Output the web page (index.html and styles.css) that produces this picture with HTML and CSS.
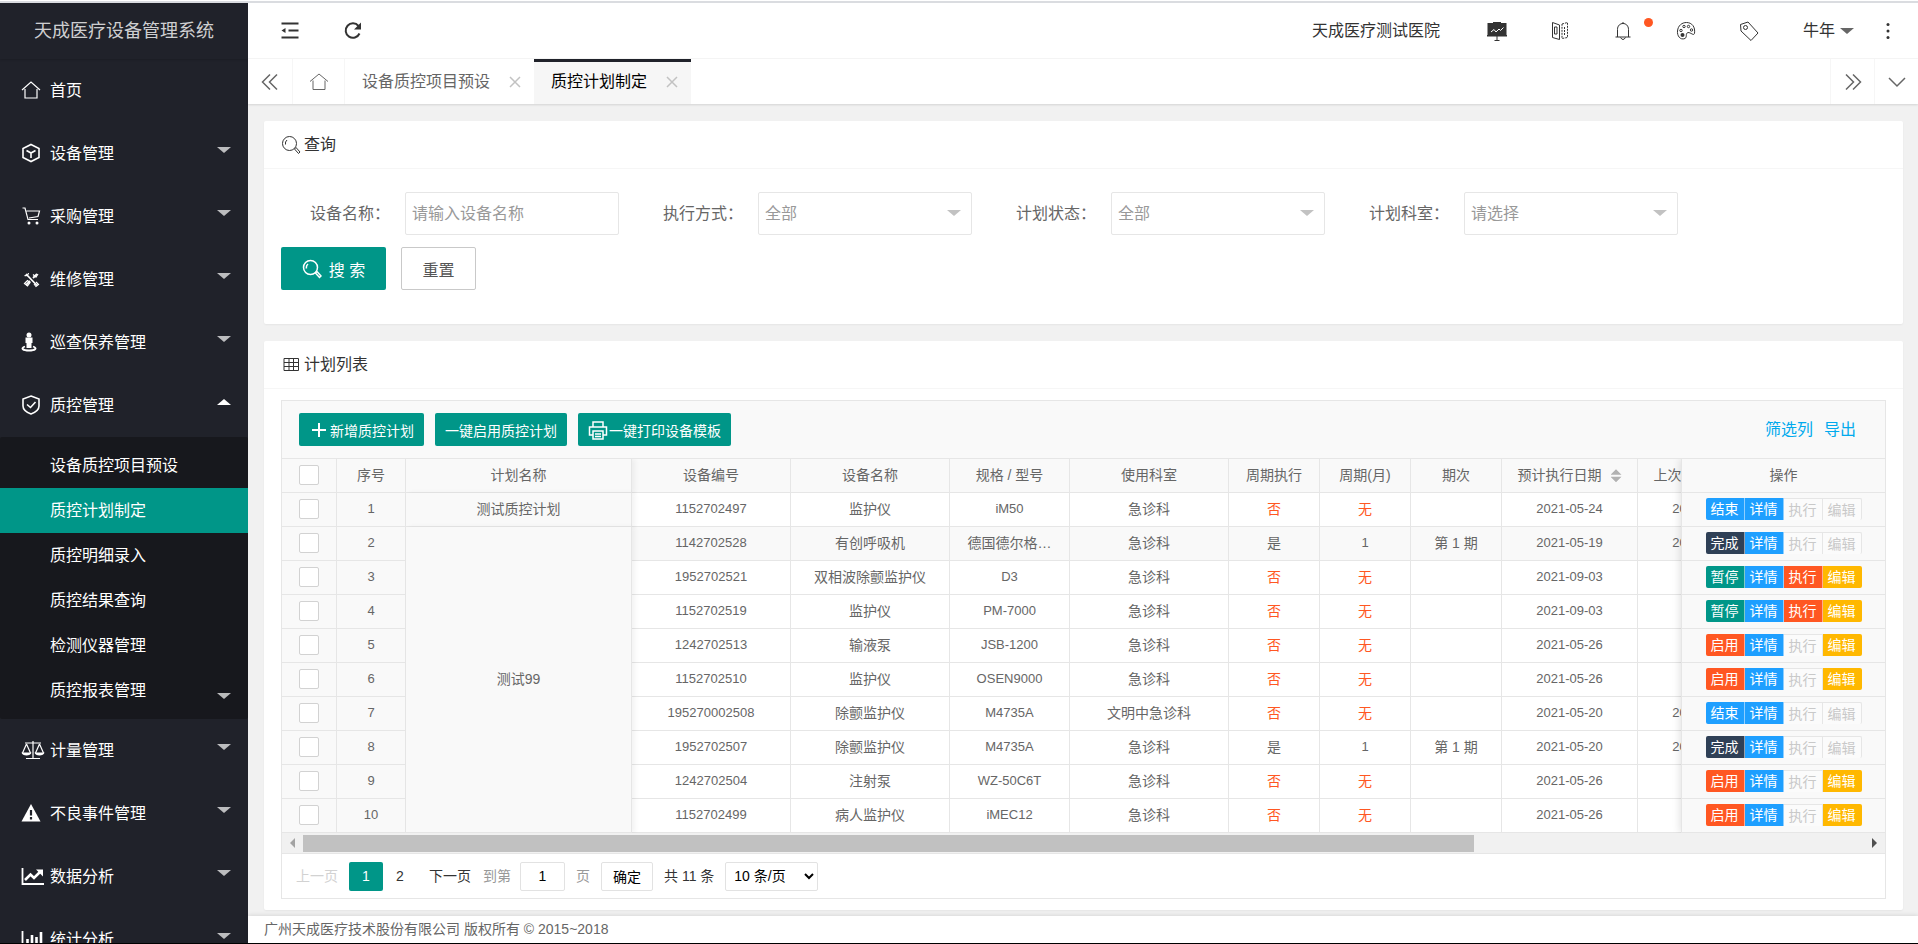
FILE: index.html
```html
<!DOCTYPE html>
<html lang="zh-CN">
<head>
    <meta charset="UTF-8">
    <meta name="viewport" content="width=device-width, initial-scale=1.0">
    <title>天成医疗设备管理系统</title>
    <link rel="stylesheet" href="styles.css">
</head>
<body>
<div class="layout">
    <aside class="side">
        <div class="logo">天成医疗设备管理系统</div>
        <nav>
            <a class="nav-item" href="#">
                <svg class="nav-icon" viewBox="0 0 20 20"><path d="M1 10 L10 2 L19 10 M4 9 V18 H16 V9"/></svg>首页</a>
            <a class="nav-item" href="#">
                <svg class="nav-icon bold" viewBox="0 0 20 20"><path d="M10 1.500 L18 5.500 V14.500 L10 18.500 L2 14.500 V5.500 Z M5.500 7.500 L10 10 L14.500 7.500 M10 10 V15"/></svg>设备管理<i class="caret"></i></a>
            <a class="nav-item" href="#">
                <svg class="nav-icon" viewBox="0 0 20 20"><path d="M1.500 2 H4 L7 13.500 H17 M5.500 5 H18.500 L17 10.500 L8 12"/><circle class="fill" cx="8" cy="17" r="1.500"/><circle class="fill" cx="16" cy="17" r="1.500"/></svg>采购管理<i class="caret"></i></a>
            <a class="nav-item" href="#">
                <svg class="nav-icon" viewBox="0 0 20 20"><path class="thick" d="M5 5 L16 16.500 M16 5 L12 9 M9 12 L5 16"/><path d="M3.500 6.500 A3 3 0 0 0 7.500 4 M12 5.500 L15 8 L17 5 M3.500 14.500 L6.500 17 L9 13.500 L6.500 11.500 Z M13 15 L15 17.500 L17.500 15.500 L15 13"/></svg>维修管理<i class="caret"></i></a>
            <a class="nav-item" href="#">
                <svg class="nav-icon" viewBox="0 0 20 20"><circle class="fill" cx="8" cy="3" r="2.500"/><path class="fill" d="M4.500 5.500 H11.500 V11 H10.500 V16 H5.500 V11 H4.500 Z"/><path class="thick" d="M4 14.500 C-1 16.500 2 18.500 8 18.500 S17 16.500 12 14.500"/></svg>巡查保养管理<i class="caret"></i></a>
            <a class="nav-item" href="#">
                <svg class="nav-icon bold" viewBox="0 0 20 20"><path d="M10 1 L18 4 V11 C18 15 14 17.500 10 19 C6 17.500 2 15 2 11 V4 Z M6 9.500 L9.500 12.500 L14.500 7"/></svg>质控管理<i class="caret open"></i></a>
            <div class="sub-nav">
                <a href="#">设备质控项目预设</a>
                <a href="#" class="active">质控计划制定</a>
                <a href="#">质控明细录入</a>
                <a href="#">质控结果查询</a>
                <a href="#">检测仪器管理</a>
                <a href="#">质控报表管理<i class="caret"></i></a>
            </div>
            <a class="nav-item" href="#">
                <svg class="nav-icon wide" viewBox="0 0 24 20"><path d="M4 3 H20 M12 1 V18 M5 18.500 H19 M5.500 4 L1.500 13 M5.500 4 L9.500 13 M18.500 4 L14.500 13 M18.500 4 L22.500 13"/><path class="fill" d="M0.500 12.500 H10.500 C10 16.500 1 16.500 0.500 12.500 Z M13.500 12.500 H23.500 C23 16.500 14 16.500 13.500 12.500 Z"/></svg>计量管理<i class="caret"></i></a>
            <a class="nav-item" href="#">
                <svg class="nav-icon" viewBox="0 0 20 20"><path class="fill" d="M10 1 L19.500 18.500 H0.500 Z"/><path class="dark" d="M10 7 V12.500 M10 14 V16.500"/></svg>不良事件管理<i class="caret"></i></a>
            <a class="nav-item" href="#">
                <svg class="nav-icon wide" viewBox="0 0 24 20"><path class="thick" d="M1.500 2 V18 H23"/><path class="line" d="M4 14 L9.500 8.500 L13 12 L19.500 5.500"/><path class="fill" d="M15 3.500 H22 V10.500 Z"/></svg>数据分析<i class="caret"></i></a>
            <a class="nav-item" href="#">
                <svg class="nav-icon wide" viewBox="0 0 24 20"><path class="thick" d="M1.500 2 V18 H23"/><path class="line" d="M6.500 10 V16 M11 6 V16 M15.500 8 V16 M20 3 V16"/></svg>统计分析<i class="caret"></i></a>
        </nav>
    </aside>

    <div class="main">
        <header class="top">
            <a class="top-cell" href="#" title="侧边伸缩"><svg class="icon" viewBox="0 0 20 20"><path class="w2" d="M1.500 2.500 H18.500 M8.500 9.500 H18.500 M1.500 16.500 H18.500"/><path class="fill" d="M1.500 9.500 L5.500 7 V12 Z"/></svg></a>
            <a class="top-cell" href="#" title="刷新"><svg class="icon" viewBox="0 0 20 20"><path class="w2" d="M16.500 12.500 A7.200 7.200 0 1 1 15.500 5"/><path class="fill" d="M18 1.500 V8.500 H11 Z"/></svg></a>
            <span class="hospital">天成医疗测试医院</span>
            <a class="top-cell" href="#"><svg class="icon" viewBox="0 0 20 20"><path class="fill" d="M6 1 H14 V2 H19.500 V14 H20 V15.500 H0 V14 H.5 V2 H6 Z"/><path class="light" d="M4 11 L7 8.500 L9 11 L12 8 L13.500 9.500 L16.500 6.500"/><path d="M10 15 V19 M7.500 19.500 H12.500"/></svg></a>
            <a class="top-cell" href="#"><svg class="icon" viewBox="0 0 20 20"><path d="M2.500 16.500 V1.500 L9.500 4 V18.500 Z M4.500 6 H7 V13 H4.500 Z"/><path class="dots" d="M12 3 L17.500 1.500 V16.500 L12 17.500 Z M14.500 6 V14"/></svg></a>
            <a class="top-cell" href="#"><svg class="icon" viewBox="0 0 20 20"><path d="M2.500 16 H17.500 M4.500 16 V8.500 C4.500 0.500 15.500 0.500 15.500 8.500 V16 M7.500 16.500 Q10 20.500 12.500 16.500 M10 1 V2.500"/></svg><i class="dot"></i></a>
            <a class="top-cell" href="#"><svg class="icon" viewBox="0 0 20 20"><path d="M9 17.500 C4 19.500 1 14.500 1.500 10 C2 4.500 6 1.500 10.500 1.500 C16 1.500 19.500 6 18.500 12.500 C17.500 15 15 11.500 12 11.500 C9 12.500 11.500 16 9 17.500 Z"/><circle cx="5" cy="9.500" r="1.200"/><circle cx="8" cy="5.500" r="1.200"/><circle cx="12.500" cy="5.500" r="1.200"/><circle cx="15.500" cy="9" r="1.200"/><circle class="fill" cx="6.500" cy="14" r="2"/></svg></a>
            <a class="top-cell" href="#"><svg class="icon" viewBox="0 0 20 20"><path d="M1.500 3.500 L9 1 L19 12 L12 19.500 L2 10 Z"/><circle cx="6.500" cy="6.500" r="2"/></svg></a>
            <a class="user" href="#">牛年<i class="caret dark"></i></a>
            <a class="more" href="#"><svg class="icon" viewBox="0 0 20 20"><circle class="fill" cx="10" cy="3.500" r="1.500"/><circle class="fill" cx="10" cy="10" r="1.500"/><circle class="fill" cx="10" cy="16.500" r="1.500"/></svg></a>
        </header>

        <div class="tabs">
            <a class="tab-ctrl" href="#"><svg class="icon" viewBox="0 0 20 20"><path class="w15" d="M10 2.500 L2.500 10 L10 17.500 M17 2.500 L9.500 10 L17 17.500"/></svg></a>
            <a class="tab-home" href="#"><svg class="icon" viewBox="0 0 20 20"><path d="M1 9.500 L10 2 L19 9.500 M4 8.500 V17.500 H16 V8.500"/></svg></a>
            <a class="tab" href="#">设备质控项目预设<svg class="close" viewBox="0 0 16 16"><path d="M3 3 L13 13 M13 3 L3 13"/></svg></a>
            <a class="tab current" href="#">质控计划制定<svg class="close" viewBox="0 0 16 16"><path d="M3 3 L13 13 M13 3 L3 13"/></svg></a>
            <a class="tab-ctrl right" href="#"><svg class="icon" viewBox="0 0 20 20"><path class="w15" d="M3 2.500 L10.500 10 L3 17.500 M10 2.500 L17.500 10 L10 17.500"/></svg></a>
            <a class="tab-ctrl last" href="#"><svg class="icon" viewBox="0 0 20 20"><path class="w15" d="M2 6 L10 14 L18 6"/></svg></a>
        </div>

        <main class="content">
            <section class="card">
                <h2 class="card-title"><svg class="icon" viewBox="0 0 20 20"><circle cx="8.500" cy="8.500" r="7"/><path d="M4.500 9.500 A4.500 4.500 0 0 1 6 5 M13.500 14 L15 12.500 L19 17 L17.500 18.500 Z"/></svg>查询</h2>
                <form class="search">
                    <div class="fields">
                        <div class="field">
                            <label for="device-name">设备名称：</label>
                            <input id="device-name" class="control" type="text" placeholder="请输入设备名称">
                        </div>
                        <div class="field">
                            <label for="exec-type">执行方式：</label>
                            <div class="select-box"><select id="exec-type" class="control"><option>全部</option></select></div>
                        </div>
                        <div class="field">
                            <label for="plan-status">计划状态：</label>
                            <div class="select-box"><select id="plan-status" class="control"><option>全部</option></select></div>
                        </div>
                        <div class="field">
                            <label for="plan-dept">计划科室：</label>
                            <div class="select-box"><select id="plan-dept" class="control"><option>请选择</option></select></div>
                        </div>
                    </div>
                    <div class="actions">
                        <button type="button" class="btn-search"><svg class="icon" viewBox="0 0 20 20"><circle cx="8.500" cy="8.500" r="7"/><path d="M4.500 9.500 A4.500 4.500 0 0 1 6 5 M13.500 14 L15 12.500 L19 17 L17.500 18.500 Z"/></svg>搜 索</button>
                        <button type="reset" class="btn-reset">重置</button>
                    </div>
                </form>
            </section>

            <section class="card">
                <h2 class="card-title"><svg class="icon" viewBox="0 0 20 20"><path d="M3 3.500 H17.500 V15.500 H3 Z M3 7.500 H17.500 M3 11.500 H17.500 M8 3.500 V15.500 M12.500 3.500 V15.500"/></svg>计划列表</h2>
                <div class="grid">
                    <div class="toolbar">
                        <button type="button" class="btn-sm"><svg class="icon" viewBox="0 0 20 20"><path class="w2" d="M10 3 V17 M3 10 H17"/></svg>新增质控计划</button>
                        <button type="button" class="btn-sm">一键启用质控计划</button>
                        <button type="button" class="btn-sm"><svg class="icon" viewBox="0 0 20 20"><path class="w15" d="M5 7 V2 H15 V7 M5 15 H1.500 V7 H18.500 V15 H15 M5 11 H15 V19 H5 Z M7 14 H13 M7 16.500 H13"/></svg>一键打印设备模板</button>
                        <div class="tool-links"><a href="#">筛选列</a><a href="#">导出</a></div>
                    </div>
                    <div class="tables">
                        <div class="scroll-pane">
                            <table class="plan-table">
                                <colgroup>
                                    <col class="c-check"><col class="c-no"><col class="c-plan"><col class="c-mid"><col class="c-mid"><col class="c-model"><col class="c-mid"><col class="c-small"><col class="c-small"><col class="c-small"><col class="c-date"><col class="c-date">
                                </colgroup>
                                <thead>
                                    <tr><th class="fix"><input type="checkbox" aria-label="全选"></th><th class="fix">序号</th><th class="fix edge">计划名称</th><th>设备编号</th><th>设备名称</th><th>规格 / 型号</th><th>使用科室</th><th>周期执行</th><th>周期(月)</th><th>期次</th><th>预计执行日期<i class="sort"></i></th><th>上次执行日期<i class="sort"></i></th></tr>
                                </thead>
                                <tbody>
                                    <tr><td class="fix"><input type="checkbox" aria-label="选择 1"></td><td class="fix num">1</td><td class="fix edge">测试质控计划</td><td class="num">1152702497</td><td>监护仪</td><td class="num">iM50</td><td>急诊科</td><td class="red">否</td><td class="red">无</td><td></td><td class="num">2021-05-24</td><td class="num">2021-05-24</td></tr>
                                    <tr class="even"><td class="fix"><input type="checkbox" aria-label="选择 2"></td><td class="fix num">2</td><td class="fix edge" rowspan="9">测试99</td><td class="num">1142702528</td><td>有创呼吸机</td><td>德国德尔格…</td><td>急诊科</td><td>是</td><td class="num">1</td><td>第 1 期</td><td class="num">2021-05-19</td><td class="num">2021-05-19</td></tr>
                                    <tr><td class="fix"><input type="checkbox" aria-label="选择 3"></td><td class="fix num">3</td><td class="num">1952702521</td><td>双相波除颤监护仪</td><td class="num">D3</td><td>急诊科</td><td class="red">否</td><td class="red">无</td><td></td><td class="num">2021-09-03</td><td></td></tr>
                                    <tr><td class="fix"><input type="checkbox" aria-label="选择 4"></td><td class="fix num">4</td><td class="num">1152702519</td><td>监护仪</td><td class="num">PM-7000</td><td>急诊科</td><td class="red">否</td><td class="red">无</td><td></td><td class="num">2021-09-03</td><td></td></tr>
                                    <tr><td class="fix"><input type="checkbox" aria-label="选择 5"></td><td class="fix num">5</td><td class="num">1242702513</td><td>输液泵</td><td class="num">JSB-1200</td><td>急诊科</td><td class="red">否</td><td class="red">无</td><td></td><td class="num">2021-05-26</td><td></td></tr>
                                    <tr><td class="fix"><input type="checkbox" aria-label="选择 6"></td><td class="fix num">6</td><td class="num">1152702510</td><td>监护仪</td><td class="num">OSEN9000</td><td>急诊科</td><td class="red">否</td><td class="red">无</td><td></td><td class="num">2021-05-26</td><td></td></tr>
                                    <tr><td class="fix"><input type="checkbox" aria-label="选择 7"></td><td class="fix num">7</td><td class="num">195270002508</td><td>除颤监护仪</td><td class="num">M4735A</td><td>文明中急诊科</td><td class="red">否</td><td class="red">无</td><td></td><td class="num">2021-05-20</td><td class="num">2021-05-20</td></tr>
                                    <tr><td class="fix"><input type="checkbox" aria-label="选择 8"></td><td class="fix num">8</td><td class="num">1952702507</td><td>除颤监护仪</td><td class="num">M4735A</td><td>急诊科</td><td>是</td><td class="num">1</td><td>第 1 期</td><td class="num">2021-05-20</td><td class="num">2021-05-20</td></tr>
                                    <tr><td class="fix"><input type="checkbox" aria-label="选择 9"></td><td class="fix num">9</td><td class="num">1242702504</td><td>注射泵</td><td class="num">WZ-50C6T</td><td>急诊科</td><td class="red">否</td><td class="red">无</td><td></td><td class="num">2021-05-26</td><td></td></tr>
                                    <tr><td class="fix"><input type="checkbox" aria-label="选择 10"></td><td class="fix num">10</td><td class="num">1152702499</td><td>病人监护仪</td><td class="num">iMEC12</td><td>急诊科</td><td class="red">否</td><td class="red">无</td><td></td><td class="num">2021-05-26</td><td></td></tr>
                                </tbody>
                            </table>
                        </div>
                        <table class="op-table">
                            <thead><tr><th>操作</th></tr></thead>
                            <tbody>
                                <tr><td><div class="ops"><button class="blue">结束</button><button class="blue">详情</button><button disabled>执行</button><button disabled>编辑</button></div></td></tr>
                                <tr><td><div class="ops"><button class="navy">完成</button><button class="blue">详情</button><button disabled>执行</button><button disabled>编辑</button></div></td></tr>
                                <tr><td><div class="ops"><button class="green">暂停</button><button class="blue">详情</button><button class="orange">执行</button><button class="yellow">编辑</button></div></td></tr>
                                <tr><td><div class="ops"><button class="green">暂停</button><button class="blue">详情</button><button class="orange">执行</button><button class="yellow">编辑</button></div></td></tr>
                                <tr><td><div class="ops"><button class="orange">启用</button><button class="blue">详情</button><button disabled>执行</button><button class="yellow">编辑</button></div></td></tr>
                                <tr><td><div class="ops"><button class="orange">启用</button><button class="blue">详情</button><button disabled>执行</button><button class="yellow">编辑</button></div></td></tr>
                                <tr><td><div class="ops"><button class="blue">结束</button><button class="blue">详情</button><button disabled>执行</button><button disabled>编辑</button></div></td></tr>
                                <tr><td><div class="ops"><button class="navy">完成</button><button class="blue">详情</button><button disabled>执行</button><button disabled>编辑</button></div></td></tr>
                                <tr><td><div class="ops"><button class="orange">启用</button><button class="blue">详情</button><button disabled>执行</button><button class="yellow">编辑</button></div></td></tr>
                                <tr><td><div class="ops"><button class="orange">启用</button><button class="blue">详情</button><button disabled>执行</button><button class="yellow">编辑</button></div></td></tr>
                            </tbody>
                        </table>
                    </div>
                    <div class="scrollbar">
                        <i class="arrow-left"></i>
                        <div class="track"><div class="thumb"></div></div>
                        <i class="arrow-right"></i>
                    </div>
                    <div class="pager">
                        <a class="prev" href="#">上一页</a>
                        <span class="page on">1</span>
                        <a class="page" href="#">2</a>
                        <a class="next" href="#">下一页</a>
                        <label class="muted" for="page-no">到第</label>
                        <input id="page-no" type="text" value="1">
                        <span class="muted">页</span>
                        <button type="button">确定</button>
                        <span class="count">共 11 条</span>
                        <select aria-label="每页条数"><option>10 条/页</option></select>
                    </div>
                </div>
            </section>
        </main>

        <footer class="footer">广州天成医疗技术股份有限公司 版权所有 © 2015~2018</footer>
    </div>
</div>
</body>
</html>
```
FILE: styles.css
```css
* {
    box-sizing: border-box;
}

body {
    margin: 0;
    padding-top: 1px;
    height: 100vh;
    overflow: hidden;
    font-family: "Liberation Sans", "Noto Sans CJK SC", sans-serif;
    font-size: 16px;
    line-height: 24px;
    color: #666;
    background: #fff;
}

a {
    color: inherit;
    text-decoration: none;
}

button, input, select {
    margin: 0;
    font-family: inherit;
    outline: none;
}

button {
    cursor: pointer;
}

.layout {
    display: flex;
    height: 100%;
    border-top: 2px solid #dadce0;
    border-bottom: 1px solid #000;
}

.icon {
    display: block;
    width: 20px;
    height: 20px;
    fill: none;
    stroke: currentColor;
    stroke-width: 1;
}

.icon .fill {
    fill: currentColor;
    stroke: none;
}

.icon .w2 {
    stroke-width: 2;
}

.icon .w15 {
    stroke-width: 1.5;
}

.icon .light {
    stroke: #fff;
}

.icon .dots {
    stroke-dasharray: 2 1;
}

/* sidebar */
.side {
    flex: none;
    width: 248px;
    overflow: hidden;
    color: #fff;
    background: #20222a;
}

.logo {
    height: 56px;
    line-height: 56px;
    font-size: 18px;
    text-align: center;
    color: rgba(255, 255, 255, .8);
    box-shadow: 0 1px 2px rgba(0, 0, 0, .15);
}

.nav-item {
    display: flex;
    position: relative;
    align-items: center;
    height: 63px;
    padding-left: 50px;
}

.nav-icon {
    position: absolute;
    left: 21px;
    top: 21px;
    width: 20px;
    height: 20px;
    fill: none;
    stroke: #fff;
    stroke-width: 1.2;
}

.nav-icon.wide {
    width: 24px;
}

.nav-icon.bold {
    stroke-width: 1.6;
}

.nav-icon .fill {
    fill: #fff;
    stroke: none;
}

.nav-icon .thick {
    stroke-width: 1.8;
}

.nav-icon .line {
    stroke-width: 2.6;
}

.nav-icon .dark {
    stroke: #20222a;
    stroke-width: 2.2;
}

.caret {
    border: 7px solid transparent;
    border-top: 6px solid rgba(255, 255, 255, .7);
    border-bottom: 0;
}

.side .caret {
    position: absolute;
    right: 17px;
    top: 25px;
}

.side .caret.open {
    border-top: 0;
    border-bottom: 6px solid #fff;
}

.sub-nav {
    padding: 6px 0;
    border-radius: 2px;
    background: #17181d;
}

.sub-nav a {
    display: block;
    position: relative;
    height: 45px;
    padding-left: 50px;
    line-height: 45px;
}

.sub-nav .active {
    background: #009688;
}

/* top bar */
.main {
    display: flex;
    flex: 1;
    flex-direction: column;
    min-width: 0;
    background: #f1f1f1;
}

.top {
    display: flex;
    flex: none;
    align-items: center;
    height: 56px;
    padding-left: 10px;
    border-bottom: 1px solid #f6f6f6;
    color: #333;
    background: #fff;
}

.top-cell {
    display: flex;
    position: relative;
    justify-content: center;
    width: 63px;
}

.hospital {
    margin-left: auto;
    margin-right: 26px;
}

.dot {
    position: absolute;
    right: 2px;
    top: -3px;
    width: 9px;
    height: 9px;
    border-radius: 50%;
    background: #ff5722;
}

.user {
    display: flex;
    align-items: center;
    gap: 5px;
    padding: 0 4px 0 22px;
}

.caret.dark {
    border-top-color: #666;
}

.more {
    display: flex;
    justify-content: center;
    width: 60px;
}

/* page tabs */
.tabs {
    display: flex;
    position: relative;
    flex: none;
    height: 45px;
    background: #fff;
    box-shadow: 0 1px 2px rgba(0, 0, 0, .12);
}

.tab-ctrl, .tab-home {
    display: flex;
    align-items: center;
    justify-content: center;
    width: 45px;
    border-right: 1px solid #f6f6f6;
}

.tab-home {
    width: 52px;
}

.tab-ctrl.right {
    margin-left: auto;
    border-left: 1px solid #f6f6f6;
}

.tab-ctrl.last {
    width: 43px;
    border: 0;
}

.tab {
    display: flex;
    align-items: center;
    gap: 17px;
    padding: 0 11px 0 17px;
}

.tab.current {
    border-top: 3px solid #20222a;
    padding-bottom: 3px;
    color: #000;
    background: #f6f6f6;
}

.close {
    width: 16px;
    height: 16px;
    stroke: #c2c2c2;
    stroke-width: 1.5;
}

/* cards */
.content {
    flex: 1;
    min-height: 0;
    overflow: hidden;
    padding: 17px 15px 0 16px;
}

.card {
    margin-bottom: 17px;
    border-radius: 2px;
    background: #fff;
    box-shadow: 0 1px 2px rgba(0, 0, 0, .05);
}

.card:last-child {
    padding-bottom: 11px;
}

.card-title {
    display: flex;
    align-items: center;
    gap: 3px;
    height: 48px;
    margin: 0;
    padding: 0 17px;
    border-bottom: 1px solid #f6f6f6;
    font-size: 16px;
    font-weight: normal;
    color: #333;
}

.search {
    padding: 23px 17px 34px;
}

.fields {
    display: flex;
    gap: 15px;
}

.field {
    display: flex;
    align-items: center;
}

.field label {
    width: 124px;
    padding: 0 15px;
    text-align: right;
    white-space: nowrap;
}

.select-box {
    position: relative;
}

.select-box::after {
    content: "";
    position: absolute;
    right: 11px;
    top: 18px;
    border: 7px solid transparent;
    border-top: 6px solid #c2c2c2;
    border-bottom: 0;
    pointer-events: none;
}

.control {
    display: block;
    width: 214px;
    height: 43px;
    padding: 0 6px;
    border: 1px solid #e6e6e6;
    border-radius: 2px;
    font-size: 16px;
    color: #999;
    background: #fff;
    appearance: none;
}

.control::placeholder {
    color: #999;
}

.actions {
    display: flex;
    gap: 15px;
    padding-top: 12px;
}

.btn-search, .btn-reset {
    display: flex;
    align-items: center;
    justify-content: center;
    height: 43px;
    border: 0;
    border-radius: 2px;
    font-size: 16px;
}

.btn-search {
    gap: 7px;
    width: 105px;
    color: #fff;
    background: #009688;
}

.btn-search .icon {
    stroke-width: 1.5;
}

.btn-reset {
    width: 75px;
    border: 1px solid #c9c9c9;
    color: #555;
    background: #fff;
}

/* plan grid */
.grid {
    margin: 11px 17px 0;
    border: 1px solid #e6e6e6;
    font-size: 14px;
}

.toolbar {
    display: flex;
    align-items: center;
    gap: 11px;
    height: 58px;
    padding: 0 29px 0 17px;
    border-bottom: 1px solid #e6e6e6;
    background: #f9f9f9;
}

.btn-sm {
    display: flex;
    align-items: center;
    justify-content: center;
    gap: 1px;
    height: 33px;
    padding: 0 10px;
    border: 0;
    border-radius: 2px;
    font-size: 14px;
    color: #fff;
    background: #009688;
}

.tool-links {
    display: flex;
    gap: 11px;
    margin-left: auto;
    font-size: 16px;
    color: #01aaed;
}

.tables {
    display: flex;
    overflow: hidden;
}

.scroll-pane {
    flex: 1;
    min-width: 0;
    overflow: hidden;
}

.plan-table, .op-table {
    table-layout: fixed;
    border-collapse: separate;
    border-spacing: 0;
}

.plan-table {
    width: 1492px;
}

.c-check { width: 55px; }
.c-no { width: 69px; }
.c-plan { width: 226px; }
.c-mid { width: 159px; }
.c-model { width: 120px; }
.c-small { width: 91px; }
.c-date { width: 136px; }

th, td {
    height: 34px;
    padding: 0 0 2px;
    border-right: 1px solid #e6e6e6;
    border-bottom: 1px solid #e6e6e6;
    line-height: 20px;
    font-weight: normal;
    text-align: center;
    white-space: nowrap;
}

th, .fix, .even td, .op-table td {
    background: #f9f9f9;
}

.num {
    font-size: 13px;
}

.red {
    color: #ff5722;
}

.edge {
    position: relative;
    box-shadow: 3px 0 5px rgba(0, 0, 0, .05);
}

.plan-table input {
    display: block;
    width: 20px;
    height: 20px;
    margin: 0 auto;
    border: 1px solid #d2d2d2;
    border-radius: 2px;
    background: #fff;
    appearance: none;
}

/* up and down arrows, cut from one grey box */
.sort {
    display: inline-block;
    width: 11px;
    height: 13px;
    margin-left: 9px;
    vertical-align: middle;
    background: #b2b2b2;
    clip-path: polygon(50% 0, 100% 42%, 0 42%, 0 58%, 100% 58%, 50% 100%, 0 58%, 0 42%);
}

.op-table {
    position: relative;
    flex: none;
    width: 204px;
    border-left: 1px solid #e6e6e6;
    box-shadow: -1px 0 8px rgba(0, 0, 0, .12);
}

.op-table th, .op-table td {
    border-right: 0;
}

.ops {
    display: flex;
    justify-content: center;
}

.ops button {
    height: 22px;
    padding: 0 5px;
    border: 0;
    border-right: 1px solid rgba(255, 255, 255, .5);
    line-height: 22px;
    font-size: 14px;
    color: #fff;
}

.ops button:first-child {
    border-radius: 2px 0 0 2px;
}

.ops button:last-child {
    border-right-color: transparent;
    border-radius: 0 2px 2px 0;
}

.ops button:disabled {
    border-top: 1px solid #e6e6e6;
    border-right: 1px solid #e6e6e6;
    color: #c9c9c9;
    background: #fbfbfb;
}

.ops .blue { background: #1e9fff; }
.ops .navy { background: #2f4056; }
.ops .green { background: #009688; }
.ops .orange { background: #ff5722; }
.ops .yellow { background: #ffb800; }

.scrollbar {
    display: flex;
    align-items: center;
    height: 21px;
    padding: 0 8px;
    border-bottom: 1px solid #e6e6e6;
    background: #f1f1f1;
}

.track {
    flex: 1;
    margin: 0 8px;
}

.thumb {
    width: 75%;
    height: 17px;
    background: #c1c1c1;
}

.arrow-left, .arrow-right {
    border: 5px solid transparent;
}

.arrow-left {
    border-left: 0;
    border-right-color: #a3a3a3;
}

.arrow-right {
    border-right: 0;
    border-left-color: #505050;
}

.pager {
    display: flex;
    align-items: center;
    height: 44px;
    color: #333;
}

.prev {
    padding: 0 11px 0 14px;
    color: #d2d2d2;
}

.page {
    width: 34px;
    height: 29px;
    line-height: 29px;
    text-align: center;
}

.page.on {
    border-radius: 2px;
    color: #fff;
    background: #009688;
}

.next {
    padding: 0 12px;
}

.muted {
    color: #999;
}

.pager input, .pager button, .pager select {
    height: 29px;
    border: 1px solid #e2e2e2;
    border-radius: 2px;
    font-size: 14px;
    color: #000;
    background: #fff;
}

.pager input {
    width: 45px;
    margin: 0 11px 0 9px;
    padding: 0;
    text-align: center;
}

.pager button {
    width: 52px;
    margin: 0 11px;
    padding: 0;
}

.pager select {
    width: 93px;
    margin-left: 11px;
    padding: 0 4px;
}

.footer {
    flex: none;
    height: 27px;
    padding-left: 16px;
    line-height: 27px;
    font-size: 14px;
    background: #fff;
    box-shadow: 0 -1px 4px rgba(0, 0, 0, .1);
}
```
